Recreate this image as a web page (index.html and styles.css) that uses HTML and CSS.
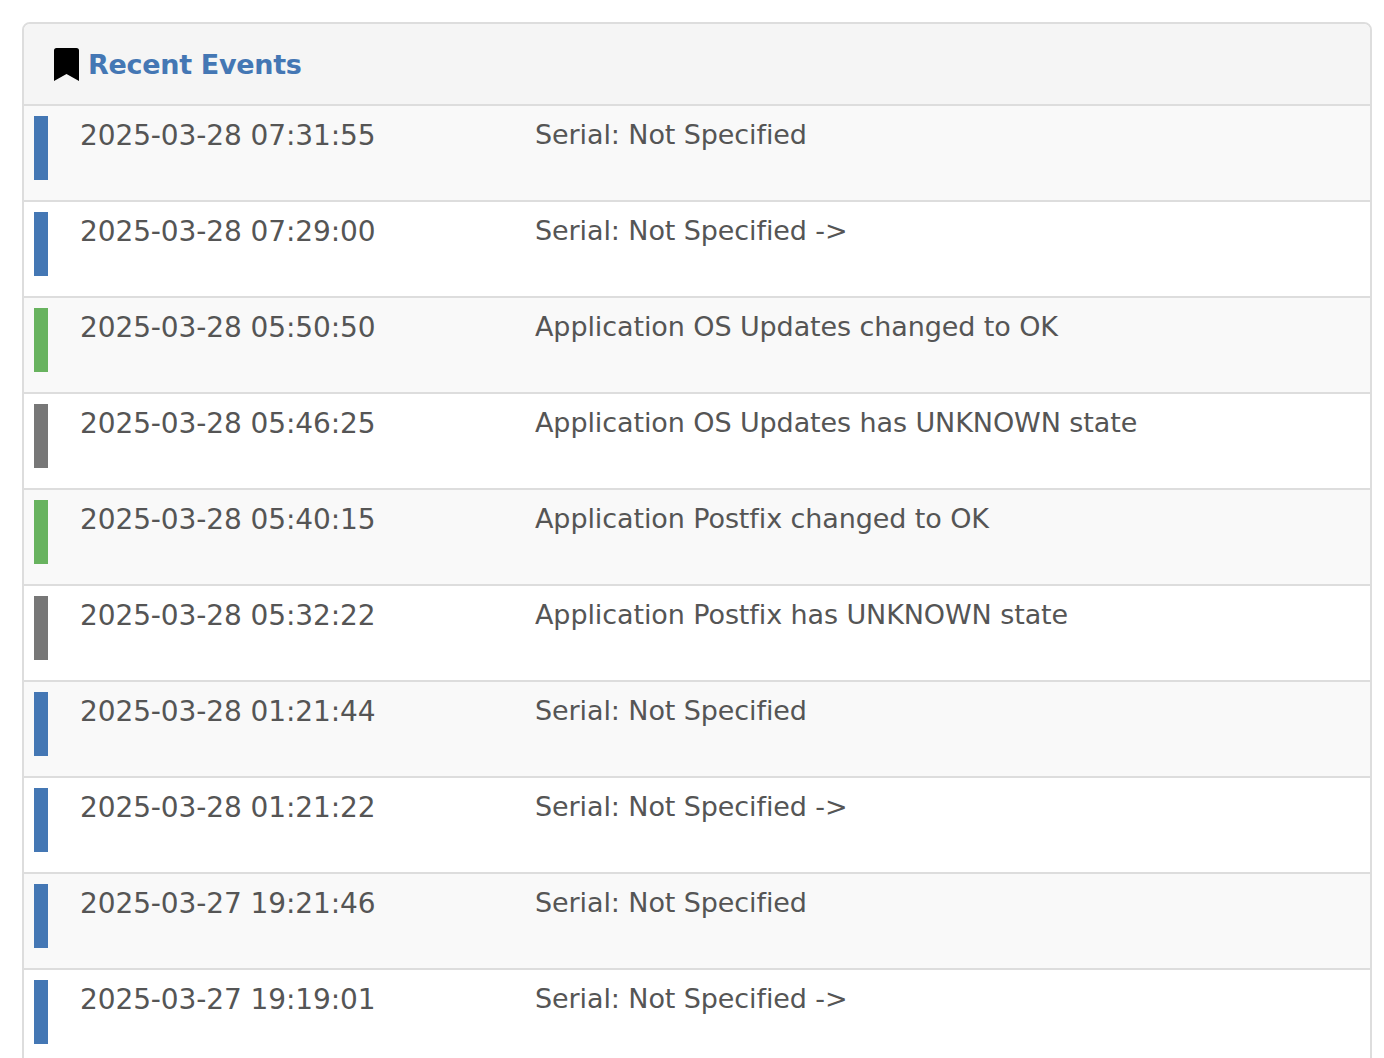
FILE: index.html
```html
<!DOCTYPE html>
<html lang="en">
<head>
<meta charset="utf-8">
<title>Recent Events</title>
<link rel="stylesheet" href="styles.css">
</head>
<body>
<section class="panel">
  <header class="panel-head">
    <svg class="icon" viewBox="0 0 25 33" aria-hidden="true"><path d="M0 2.5Q0 0 2.500 0H22.500Q25 0 25 2.500V33L12.500 26L0 33Z"/></svg>
    <h2 class="title">Recent Events</h2>
  </header>
  <div class="row odd"><span class="bar blue"></span><span class="time">2025-03-28 07:31:55</span><span class="msg">Serial: Not Specified</span></div>
  <div class="row"><span class="bar blue"></span><span class="time">2025-03-28 07:29:00</span><span class="msg">Serial: Not Specified -&gt;</span></div>
  <div class="row odd"><span class="bar green"></span><span class="time">2025-03-28 05:50:50</span><span class="msg">Application OS Updates changed to OK</span></div>
  <div class="row"><span class="bar gray"></span><span class="time">2025-03-28 05:46:25</span><span class="msg">Application OS Updates has UNKNOWN state</span></div>
  <div class="row odd"><span class="bar green"></span><span class="time">2025-03-28 05:40:15</span><span class="msg">Application Postfix changed to OK</span></div>
  <div class="row"><span class="bar gray"></span><span class="time">2025-03-28 05:32:22</span><span class="msg">Application Postfix has UNKNOWN state</span></div>
  <div class="row odd"><span class="bar blue"></span><span class="time">2025-03-28 01:21:44</span><span class="msg">Serial: Not Specified</span></div>
  <div class="row"><span class="bar blue"></span><span class="time">2025-03-28 01:21:22</span><span class="msg">Serial: Not Specified -&gt;</span></div>
  <div class="row odd"><span class="bar blue"></span><span class="time">2025-03-27 19:21:46</span><span class="msg">Serial: Not Specified</span></div>
  <div class="row"><span class="bar blue"></span><span class="time">2025-03-27 19:19:01</span><span class="msg">Serial: Not Specified -&gt;</span></div>
</section>
</body>
</html>
```
FILE: styles.css
```css
html, body {
  margin: 0;
  height: 1058px;
  overflow: hidden;
  background: #fff;
}
body {
  padding: 22px 12px 0 22px;
  box-sizing: border-box;
  font-family: "DejaVu Sans", Verdana, sans-serif;
  color: #555;
  font-size: 28px;
}
.panel {
  border: 2px solid #ddd;
  border-radius: 8px 8px 0 0;
  background: #fff;
}
.panel-head {
  display: flex;
  align-items: center;
  height: 80px;
  padding-left: 30px;
  gap: 9px;
  background: #f5f5f5;
  border-bottom: 2px solid #ddd;
  border-radius: 6px 6px 0 0;
}
.icon {
  width: 25px;
  height: 33px;
  margin-top: 1px;
  fill: #000;
  flex: none;
}
.title {
  margin: 0;
  font-size: 27px;
  font-weight: 700;
  letter-spacing: -0.3px;
  color: #4477b4;
}
.row {
  display: flex;
  height: 94px;
  border-bottom: 2px solid #ddd;
  padding-left: 10px;
  background: #fff;
}
.row.odd {
  background: #f9f9f9;
}
.bar {
  flex: none;
  width: 14px;
  height: 64px;
  margin-top: 10px;
}
.blue { background: #4477b4; }
.green { background: #68b35f; }
.gray { background: #777; }
.time {
  flex: none;
  width: 455px;
  margin-left: 32px;
  padding-top: 13px;
  line-height: 34px;
  letter-spacing: -0.1px;
}
.msg {
  padding-top: 12px;
  line-height: 34px;
  font-size: 27px;
  letter-spacing: -0.1px;
}
```
